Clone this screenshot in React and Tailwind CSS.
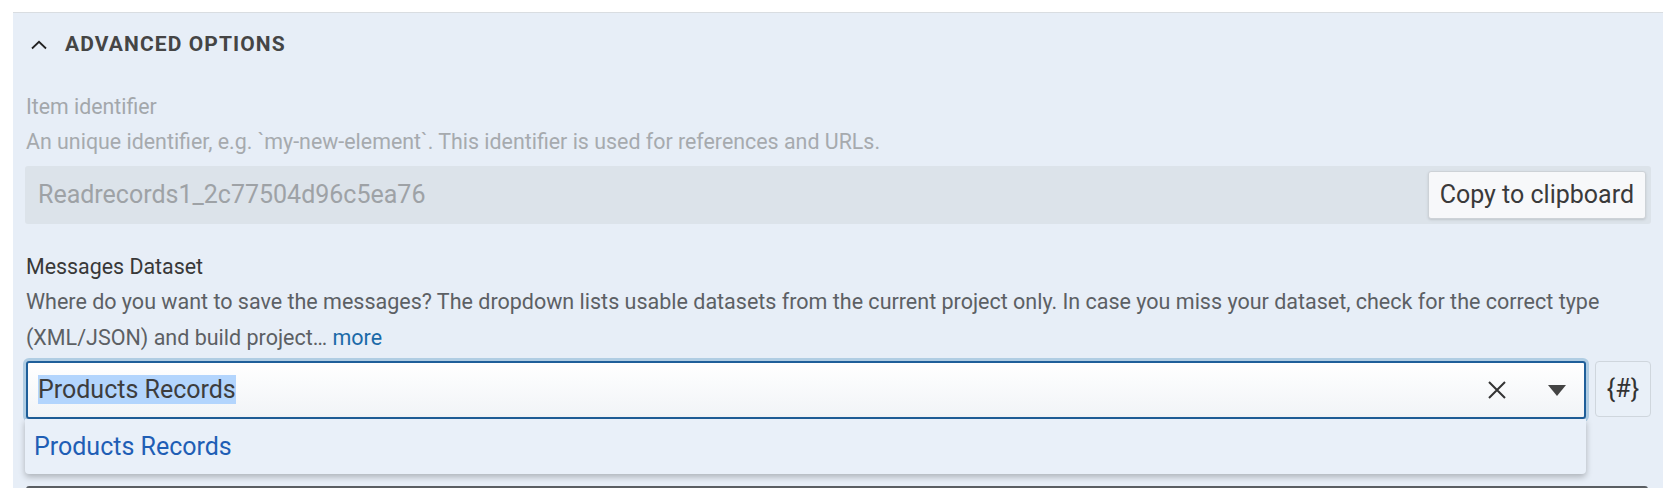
import React from 'react'

const font = { fontFamily: 'Roboto, "Noto Sans", Arial, sans-serif' }

function ChevronUp() {
  return (
    <svg width="18" height="10" viewBox="0 0 18 10" fill="none" className="shrink-0">
      <path d="M2 8.5 L9 1.8 L16 8.5" stroke="#222" strokeWidth="1.8" />
    </svg>
  )
}

function ClearIcon() {
  return (
    <svg width="18" height="18" viewBox="0 0 18 18" fill="none">
      <path d="M1 1 L17 17 M17 1 L1 17" stroke="#333" strokeWidth="2" />
    </svg>
  )
}

function Caret() {
  return (
    <svg width="18" height="11" viewBox="0 0 18 11">
      <path d="M0 0 H18 L9 11 Z" fill="#444" />
    </svg>
  )
}

export default function App() {
  return (
    <div className="min-h-screen bg-white px-[13px] pt-[12px]" style={font}>
      <div className="h-[476px] overflow-hidden border-t border-[#d9dde1] bg-[#e7eef7] px-[12px]">
        <div className="flex h-[64px] items-center gap-[17px] pl-[5px]">
          <ChevronUp />
          <span className="text-[21px] font-bold uppercase tracking-[1.1px] text-[#454545]">
            Advanced options
          </span>
        </div>

        <div className="mt-[16px] pl-[1px] text-[21.3px] leading-[28px] text-[#a3a7ab]">Item identifier</div>
        <div className="mt-[4px] pl-[1px] text-[21.4px] leading-[34px] text-[#a6aaae]">
          An unique identifier, e.g. `my-new-element`. This identifier is used for references and URLs.
        </div>

        <div className="mt-[7px] flex h-[58px] items-center justify-between rounded-[3px] bg-[#dce3ea] pl-[13px] pr-[5px]">
          <span className="text-[25px] text-[#9ea2a6]">Readrecords1_2c77504d96c5ea76</span>
          <button className="h-[48px] rounded-[3px] border border-[#cdd2d7] bg-[#f7f8fa] px-[11px] text-[25px] text-[#3a3a3a] shadow-sm">
            Copy to clipboard
          </button>
        </div>

        <div className="mt-[29px] pl-[1px] text-[21.4px] leading-[28px] text-[#383838]">Messages Dataset</div>
        <div className="mt-[3px] pl-[1px] text-[21.5px] leading-[36px] text-[#5c6064]">
          Where do you want to save the messages? The dropdown lists usable datasets from the current project only. In case you miss your dataset, check for the correct type (XML/JSON) and build project…{' '}
          <span className="text-[#1b6aa8]">more</span>
        </div>

        <div className="mt-[5px] flex items-start gap-[9px]">
          <div className="relative flex-1 pl-[1px]">
            <div className="flex h-[58px] items-center rounded-[3px] border-2 border-[#1f5f9a] bg-linear-to-b from-white to-[#f1f4f7] pl-[10px] pr-[18px] shadow-[0_0_0_3px_#b0cde3]">
              <span className="flex-1">
                <span className="bg-[#b3d5fd] text-[25px] leading-[29px] text-[#3d3d3d]">Products Records</span>
              </span>
              <div className="flex items-center gap-[42px]">
                <ClearIcon />
                <Caret />
              </div>
            </div>
            <div className="absolute left-0 right-0 top-[58px] z-10 flex h-[55px] items-center rounded-b-[4px] bg-[#e9f0f9] pl-[9px] shadow-[0_3px_6px_rgba(0,0,0,0.25)]">
              <span className="text-[25px] text-[#1f5eb5]">Products Records</span>
            </div>
          </div>
          <button className="flex h-[56px] w-[56px] items-center justify-center rounded-[4px] border border-[#cfd6dd] bg-[#e9f0f8] text-[25px] text-[#333]">
            {'{#}'}
          </button>
        </div>

        <div className="mt-[67px] ml-[1px] mr-[3px] h-[10px] rounded-t-[3px] border-t-2 border-[#5a5e62]" />
      </div>
    </div>
  )
}
